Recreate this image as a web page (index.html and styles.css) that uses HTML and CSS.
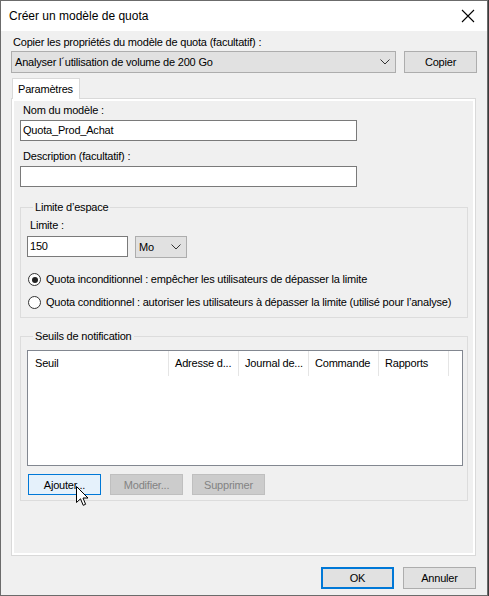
FILE: index.html
```html
<!DOCTYPE html>
<html lang="fr">
<head>
<meta charset="utf-8">
<link rel="stylesheet" href="styles.css">
</head>
<body>
<div class="window">
  <div class="titlebar">
    <span class="title">Créer un modèle de quota</span>
    <svg class="close" width="14" height="14" viewBox="0 0 14 14"><path d="M1 1 L13 13 M13 1 L1 13" stroke="#000" stroke-width="1.1" fill="none"/></svg>
  </div>
  <div class="content">
    <div class="lbl top-lbl">Copier les propriétés du modèle de quota (facultatif) :</div>
    <div class="row copy-row">
      <div class="combo wide"><span>Analyser l´utilisation de volume de 200 Go</span><svg class="chev" width="10" height="6" viewBox="0 0 10 6"><path d="M0.5 0.5 L5 5 L9.5 0.5" stroke="#333" fill="none"/></svg></div>
      <div class="btn">Copier</div>
    </div>
    <div class="tabs"><div class="tab">Paramètres</div></div>
    <div class="page">
      <div class="lbl ind first">Nom du modèle :</div>
      <div class="text wide-text">Quota_Prod_Achat</div>
      <div class="lbl ind desc">Description (facultatif) :</div>
      <div class="text wide-text"></div>

      <fieldset class="group limit">
        <legend>Limite d’espace</legend>
        <div class="lbl lim-lbl">Limite :</div>
        <div class="row lim-row">
          <div class="text small-text">150</div>
          <div class="combo unit"><span>Mo</span><svg class="chev" width="10" height="6" viewBox="0 0 10 6"><path d="M0.5 0.5 L5 5 L9.5 0.5" stroke="#333" fill="none"/></svg></div>
        </div>
        <div class="radio r1"><span class="circle on"></span><span>Quota inconditionnel : empêcher les utilisateurs de dépasser la limite</span></div>
        <div class="radio r2"><span class="circle"></span><span>Quota conditionnel : autoriser les utilisateurs à dépasser la limite (utilisé pour l’analyse)</span></div>
      </fieldset>

      <fieldset class="group notif">
        <legend>Seuils de notification</legend>
        <div class="list">
          <div class="header">
            <div class="col c1">Seuil</div>
            <div class="col">Adresse d...</div>
            <div class="col">Journal de...</div>
            <div class="col">Commande</div>
            <div class="col">Rapports</div>
          </div>
        </div>
        <div class="row btn-row">
          <div class="btn hover">Ajouter...</div>
          <div class="btn disabled">Modifier...</div>
          <div class="btn disabled">Supprimer</div>
        </div>
      </fieldset>
    </div>
    <div class="row footer">
      <div class="btn default">OK</div>
      <div class="btn">Annuler</div>
    </div>
  </div>
  <svg class="cursor" width="13" height="21" viewBox="0 0 13 21"><path d="M0.5 0.5 L0.5 16.5 L4.5 12.8 L7.2 19.3 L9.6 18.3 L7 12 L12 12 Z" fill="#fff" stroke="#000" stroke-width="1" stroke-linejoin="miter"/></svg>
</div>
</body>
</html>
```
FILE: styles.css
```css
* { box-sizing: border-box; }
html, body { margin: 0; padding: 0; }
body {
  width: 489px; height: 596px; overflow: hidden;
  background: #3a3a3a;
  font-family: "Liberation Sans", Arial, sans-serif;
  font-size: 11px; color: #000;
  letter-spacing: -0.2px;
}
.window {
  position: relative;
  width: 488px; height: 596px;
  border: 1px solid #6b6b6b;
  background: #f0f0f0;
  display: flex; flex-direction: column;
}
.titlebar {
  height: 30px; background: #fff;
  display: flex; align-items: center; justify-content: space-between;
  padding: 0 12px 0 8px;
}
.title { font-size: 12px; letter-spacing: 0; }
.close { display: block; }
.content { flex: 1; padding: 0 0 0 10px; display: flex; flex-direction: column; }
.lbl { line-height: 13px; white-space: nowrap; }
.top-lbl { margin: 5px 0 0 2px; }
.row { display: flex; }
.copy-row { margin-top: 2px; gap: 8px; }
.combo {
  height: 22px; background: #e1e1e1; border: 1px solid #adadad;
  display: flex; align-items: center; justify-content: space-between;
  padding: 0 5px 0 3px; white-space: nowrap;
}
.combo.wide { width: 385px; }
.btn {
  width: 73px; height: 22px; background: #e1e1e1; border: 1px solid #adadad;
  display: flex; align-items: center; justify-content: center;
  white-space: nowrap;
}
.tabs { margin-top: 5px; display: flex; padding-left: 1px; }
.tab {
  width: 68px; height: 21px; background: #fff;
  border: 1px solid #d9d9d9; border-bottom: none;
  padding: 4px 0 0 5px; line-height: 13px;
  position: relative; z-index: 1; margin-bottom: -1px;
}
.page {
  width: 465px; height: 458px;
  border: 1px solid #d9d9d9;
  box-shadow: inset 0 0 0 2px #fff;
  padding: 4px 0 0 8px;
  display: flex; flex-direction: column;
}
.ind { margin-left: 3px; }
.first { margin-top: 1px; }
.text {
  background: #fff; border: 1px solid #7a7a7a; height: 21px;
  padding: 0 2px; line-height: 19px;
}
.wide-text { width: 337px; margin-top: 3px; }
.desc { margin-top: 9px; }
.group {
  margin: 0; padding: 0 0 0 6px;
  border: 1px solid #dcdcdc;
  width: 448px;
}
.group legend { padding: 0 2px; margin-left: 6px; line-height: 13px; }
.limit { margin-top: 14px; height: 117px; }
.lim-lbl { margin: 5px 0 0 3px; }
.lim-row { margin-top: 4px; gap: 7px; }
.small-text { width: 101px; }
.unit { width: 52px; height: 22px; }
.radio { display: flex; align-items: center; gap: 5px; line-height: 13px; margin-left: 1px; white-space: nowrap; }
.r1 { margin-top: 15px; }
.r2 { margin-top: 10px; }
.circle {
  width: 13px; height: 13px; border-radius: 50%;
  border: 1px solid #333; background: #fff; position: relative; flex: none;
}
.circle.on::after {
  content: ""; position: absolute; left: 2.5px; top: 2.5px;
  width: 6px; height: 6px; border-radius: 50%; background: #222;
}
.notif { margin-top: 12px; height: 171px; }
.list {
  width: 436px; height: 116px; margin-top: 7px;
  background: #fff; border: 1px solid #828790;
}
.header { display: flex; height: 25px; }
.col {
  width: 70px; padding: 6px 0 0 6px;
  border-right: 1px solid #e5e5e5; line-height: 13px;
  white-space: nowrap;
}
.col.c1 { width: 141px; padding-left: 7px; }
.btn-row { margin-top: 8px; gap: 9px; padding-left: 1px; }
.btn-row .btn { height: 21px; }
.btn.hover { background: #e5f1fb; border-color: #0078d7; }
.btn.disabled { background: #cccccc; border-color: #bfbfbf; color: #838383; }
.footer { margin-top: 11px; justify-content: flex-end; gap: 9px; padding-right: 11px; }
.btn.default { border: 2px solid #0078d7; }
.cursor { position: absolute; left: 75px; top: 485px; }
```
